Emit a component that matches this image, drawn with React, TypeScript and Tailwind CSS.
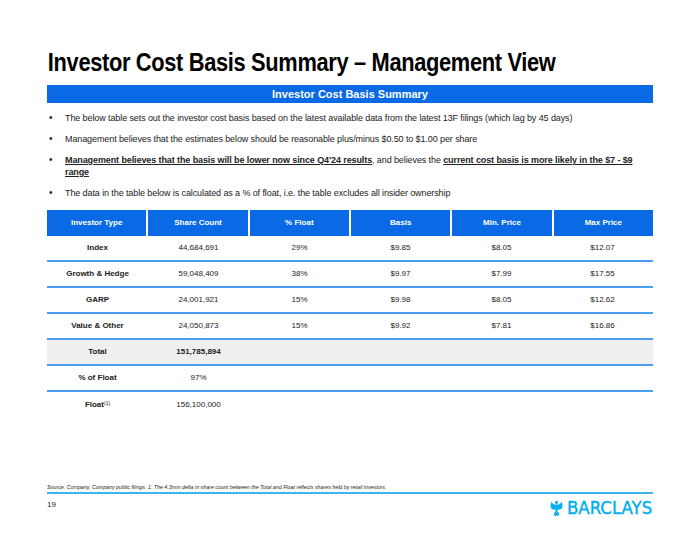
import React from "react";

const rows = [
  { type: "Index", count: "44,684,691", pct: "29%", basis: "$9.85", min: "$8.05", max: "$12.07" },
  { type: "Growth & Hedge", count: "59,048,409", pct: "38%", basis: "$9.97", min: "$7.99", max: "$17.55" },
  { type: "GARP", count: "24,001,921", pct: "15%", basis: "$9.98", min: "$8.05", max: "$12.62" },
  { type: "Value & Other", count: "24,050,873", pct: "15%", basis: "$9.92", min: "$7.81", max: "$16.86" },
];

const headers = ["Investor Type", "Share Count", "% Float", "Basis", "Min. Price", "Max Price"];

// spread eagle mark
const Eagle: React.FC = () => (
  <svg width="13" height="17" viewBox="0 0 24 32" fill="#00aeef">
    <ellipse cx="12" cy="4.5" rx="2.6" ry="3" />
    <path d="M13.8 5.5 L16 6.5 L13.8 7.2 Z" />
    <path d="M10.5 9.5 C7 8.5 4 6.5 1.5 2.5 L2 7 L0 7.5 L1.8 10.5 L0 11.5 L2.2 14 L0.8 15.5 L4 17 C6 18.5 8.5 18.5 10.5 17.5 Z" />
    <path d="M13.5 9.5 C17 8.5 20 6.5 22.5 2.5 L22 7 L24 7.5 L22.2 10.5 L24 11.5 L21.8 14 L23.2 15.5 L20 17 C18 18.5 15.5 18.5 13.5 17.5 Z" />
    <path d="M9.5 8.5 L14.5 8.5 L14 21 L12 23 L10 21 Z" />
    <path d="M9.5 21 L6 29.5 L8.8 28 L9.8 31 L12 28.2 L14.2 31 L15.2 28 L18 29.5 L14.5 21 L12 23 Z" />
  </svg>
);

export default function App() {
  return (
    <div className="w-[700px] h-[542px] bg-white flex flex-col px-[47px] font-['Liberation_Sans',Arial,sans-serif] text-[#1a1a1a]">
      <h1 className="pt-[48px] text-[26px] leading-[28px] font-bold tracking-[-0.4px] text-black pl-[1px] scale-x-[0.84] origin-left whitespace-nowrap">
        Investor Cost Basis Summary – Management View
      </h1>

      <div className="mt-[9px] h-[18px] bg-[#0a6ae6] flex items-center justify-center text-white text-[11px] font-bold">
        Investor Cost Basis Summary
      </div>

      <ul className="mt-[9px] text-[9px] leading-[12px] tracking-[-0.1px] text-[#222] pr-[20px] flex flex-col gap-[9px]">
        <li className="flex">
          <span className="w-[18px] pl-[2px] shrink-0 text-[10px]">•</span>
          <span>The below table sets out the investor cost basis based on the latest available data from the latest 13F filings (which lag by 45 days)</span>
        </li>
        <li className="flex">
          <span className="w-[18px] pl-[2px] shrink-0 text-[10px]">•</span>
          <span>Management believes that the estimates below should be reasonable plus/minus $0.50 to $1.00 per share</span>
        </li>
        <li className="flex">
          <span className="w-[18px] pl-[2px] shrink-0 text-[10px]">•</span>
          <span>
            <span className="font-bold underline">Management believes that the basis will be lower now since Q4'24 results</span>, and believes the{" "}
            <span className="font-bold underline">current cost basis is more likely in the $7 - $9 range</span>
          </span>
        </li>
        <li className="flex">
          <span className="w-[18px] pl-[2px] shrink-0 text-[10px]">•</span>
          <span>The data in the table below is calculated as a % of float, i.e. the table excludes all insider ownership</span>
        </li>
      </ul>

      <div className="mt-[11px] text-[8px]">
        <div className="grid grid-cols-6 gap-x-[2px] h-[26px]">
          {headers.map((h) => (
            <div key={h} className="bg-[#0a6ae6] text-white font-bold flex items-center justify-center">
              {h}
            </div>
          ))}
        </div>
        {rows.map((r) => (
          <div key={r.type} className="grid grid-cols-6 h-[26px] items-center text-center border-b-2 border-[#4b9df0]">
            <div className="font-bold">{r.type}</div>
            <div>{r.count}</div>
            <div>{r.pct}</div>
            <div>{r.basis}</div>
            <div>{r.min}</div>
            <div>{r.max}</div>
          </div>
        ))}
        <div className="grid grid-cols-6 h-[26px] items-center text-center border-b-2 border-[#4b9df0] bg-[#efefef]">
          <div className="font-bold">Total</div>
          <div className="font-bold">151,785,894</div>
        </div>
        <div className="grid grid-cols-6 h-[26px] items-center text-center border-b-2 border-[#4b9df0]">
          <div className="font-bold">% of Float</div>
          <div>97%</div>
        </div>
        <div className="grid grid-cols-6 h-[26px] items-center text-center">
          <div className="font-bold">
            Float<sup className="text-[5px] font-normal">(1)</sup>
          </div>
          <div>156,100,000</div>
        </div>
      </div>

      <div className="mt-auto pb-[25px]">
        <p className="text-[5.3px] italic leading-[7px] pb-[1px]">
          Source: Company, Company public filings. 1. The 4.3mm delta in share count between the Total and Float reflects shares held by retail investors.
        </p>
        <div className="h-[2px] bg-[#3cb4ef]" />
        <div className="flex items-start justify-between pt-[5px]">
          <span className="text-[8px] leading-[10px] pt-[1px]">19</span>
          <div className="flex items-center gap-[4px] text-[#00aeef]">
            <Eagle />
            <span className="text-[18px] leading-[18px] font-['DejaVu_Sans',sans-serif] scale-x-[0.92] origin-left -mr-[7px] [-webkit-text-stroke:0.4px_#00aeef]">
              BARCLAYS
            </span>
          </div>
        </div>
      </div>
    </div>
  );
}
